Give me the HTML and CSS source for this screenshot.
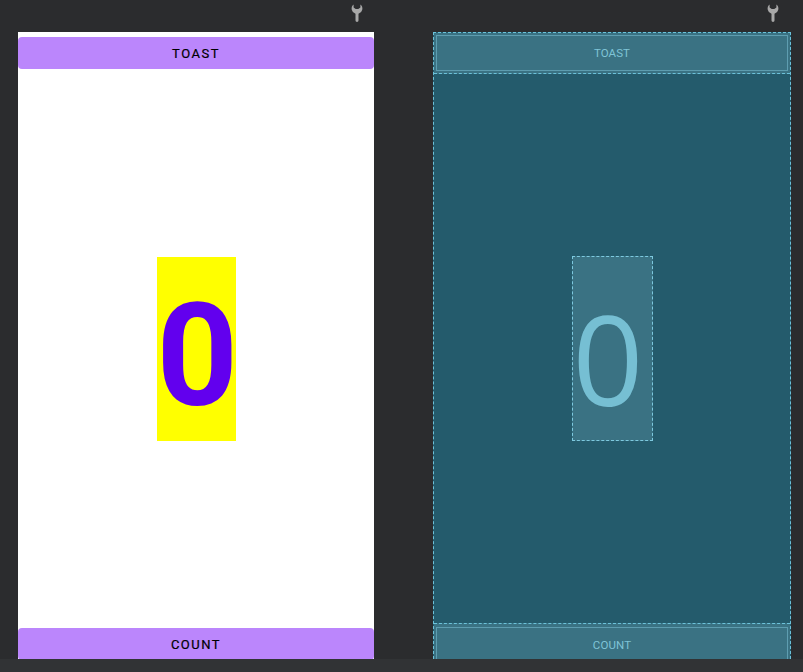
FILE: index.html
```html
<!DOCTYPE html>
<html>
<head>
<meta charset="utf-8">
<link rel="stylesheet" href="styles.css">
</head>
<body>
<div class="stage">
  <div class="col col-design">
    <div class="tools">
      <svg class="wrench" width="12" height="18" viewBox="0 0 12 18"><path d="M2.6 0.6A5.2 5.2 0 0 0 4.5 9.7V16.6Q4.5 18 6 18Q7.5 18 7.5 16.6V9.7A5.2 5.2 0 0 0 9.4 0.6V3.6L7.3 5H4.7L2.6 3.6Z" fill="#a8a8a8"/></svg>
    </div>
    <div class="phone">
      <div class="btn btn-toast">TOAST</div>
      <div class="middle">
        <div class="count-box">0</div>
      </div>
      <div class="btn btn-count">COUNT</div>
    </div>
  </div>
  <div class="col col-blue">
    <div class="tools">
      <svg class="wrench" width="12" height="18" viewBox="0 0 12 18"><path d="M2.6 0.6A5.2 5.2 0 0 0 4.5 9.7V16.6Q4.5 18 6 18Q7.5 18 7.5 16.6V9.7A5.2 5.2 0 0 0 9.4 0.6V3.6L7.3 5H4.7L2.6 3.6Z" fill="#a8a8a8"/></svg>
    </div>
    <div class="blueprint">
      <div class="bp-region bp-top"><div class="bp-btn">TOAST</div></div>
      <div class="bp-middle">
        <div class="bp-count">0</div>
      </div>
      <div class="bp-region bp-bottom"><div class="bp-btn">COUNT</div></div>
    </div>
  </div>
</div>
<div class="footer"></div>
</body>
</html>
```
FILE: styles.css
```css
html, body {
  margin: 0;
  padding: 0;
  background: #2b2c2e;
  width: 803px;
  height: 672px;
  overflow: hidden;
  font-family: Roboto, "Liberation Sans", sans-serif;
}
.stage {
  display: flex;
  height: 659px;
  overflow: hidden;
}
.col {
  display: flex;
  flex-direction: column;
}
.col-design {
  margin-left: 18px;
  width: 356px;
}
.col-blue {
  margin-left: 59px;
  width: 358px;
}
.tools {
  height: 32px;
  box-sizing: border-box;
  padding-top: 4px;
  padding-right: 11px;
  display: flex;
  justify-content: flex-end;
  align-items: flex-start;
}
.col-blue .tools {
  padding-right: 12px;
}
.wrench {
  display: block;
}
.phone {
  background: #ffffff;
  height: 627px;
  overflow: hidden;
  display: flex;
  flex-direction: column;
}
.btn {
  flex: none;
  height: 32px;
  background: #bb86fc;
  border-radius: 4px;
  display: flex;
  align-items: center;
  justify-content: center;
  font-weight: 400;
  font-size: 13px;
  letter-spacing: 1.5px;
  color: #000;
  -webkit-text-stroke: 0.2px #000;
}
.btn-toast {
  margin-top: 5px;
}
.middle {
  flex: none;
  height: 559px;
  display: flex;
  align-items: center;
  justify-content: center;
}
.count-box {
  width: 79px;
  height: 184px;
  box-sizing: border-box;
  padding-top: 16px;
  background: #ffff00;
  color: #6200ee;
  font-weight: 700;
  font-size: 142px;
  line-height: normal;
  text-align: center;
}
.blueprint {
  height: 627px;
  box-sizing: border-box;
  border: 1px dashed #6cc2da;
  border-bottom: none;
  background: #245b6c;
  overflow: hidden;
  display: flex;
  flex-direction: column;
}
.bp-region {
  flex: none;
  height: 41px;
  box-sizing: border-box;
  background: #3a7283;
  padding: 2px;
}
.bp-top {
  border-bottom: 1px dashed #6cc2da;
}
.bp-bottom {
  border-top: 1px dashed #6cc2da;
  padding-top: 3px;
}
.bp-btn {
  height: 36px;
  box-sizing: border-box;
  border: 1px solid #5e9db0;
  display: flex;
  align-items: center;
  justify-content: center;
  color: #7fc4d7;
  font-size: 11.5px;
  letter-spacing: 0.1px;
}
.bp-middle {
  flex: none;
  height: 549px;
  display: flex;
  align-items: center;
  justify-content: center;
}
.bp-count {
  width: 81px;
  height: 185px;
  box-sizing: border-box;
  border: 1px dashed #7dc9df;
  background: #3a7283;
  color: #76bfd3;
  font-family: "Open Sans", Roboto, sans-serif;
  font-size: 124px;
  font-weight: 400;
  line-height: 1;
  text-align: center;
  padding-top: 39px;
  padding-right: 8px;
}
.footer {
  height: 13px;
  background: #313335;
}
```
